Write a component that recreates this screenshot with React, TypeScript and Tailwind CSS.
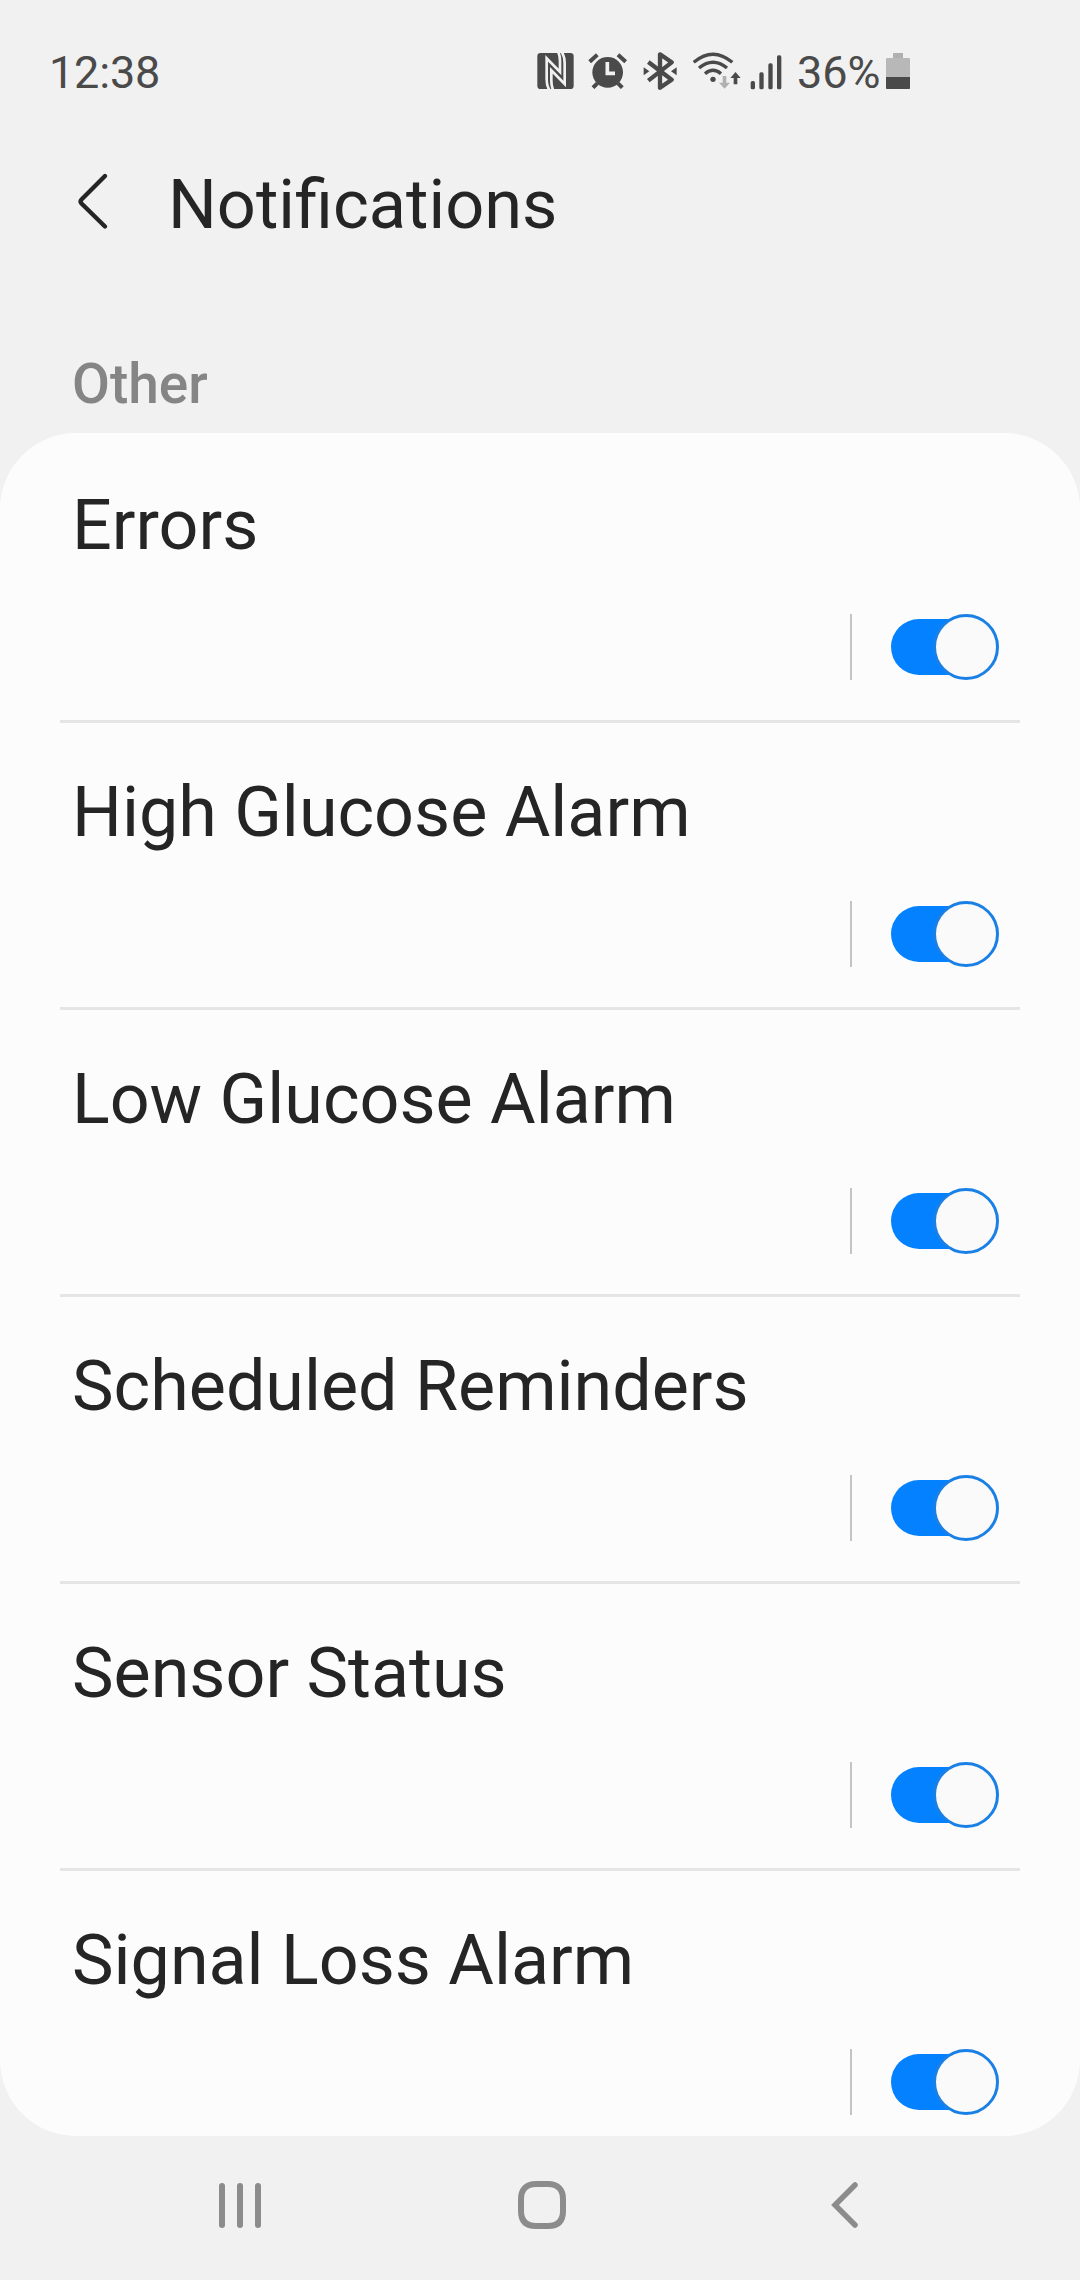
const ROWS = [
  'Errors',
  'High Glucose Alarm',
  'Low Glucose Alarm',
  'Scheduled Reminders',
  'Sensor Status',
  'Signal Loss Alarm',
];

function NfcIcon() {
  return (
    <svg className="h-[36px] w-[37px]" viewBox="51 39 111 108" fill="none">
      <rect x="52" y="39" width="109" height="108" rx="10" fill="#4a4a4a" />
      <g stroke="#f1f1f1" strokeWidth="8">
        <path d="M88 149Q80 138 80 118V55L120 96V64Q120 46 115 37" />
        <path d="M126 37Q134 50 134 70V132L94 91V122Q94 138 99 149" />
      </g>
    </svg>
  );
}

function AlarmIcon() {
  return (
    <svg className="h-[36px] w-[40px]" viewBox="205 39 120 108" fill="none">
      <circle cx="264" cy="97" r="46" fill="#4a4a4a" />
      <path
        d="M210 65L233 44M318 65L295 44M233 130L220 143M295 130L308 143"
        stroke="#4a4a4a"
        strokeWidth="12"
      />
      <path d="M263 66V100H286" stroke="#f1f1f1" strokeWidth="11" />
    </svg>
  );
}

function BluetoothIcon() {
  return (
    <svg className="h-[38px] w-[34px]" viewBox="370 36 102 114" fill="none">
      <path
        d="M386 66L456 119L421 143V43L456 67L386 122"
        stroke="#4a4a4a"
        strokeWidth="13"
        strokeLinejoin="round"
      />
      <path d="M372 82L389 94L372 106ZM471 82L454 94L471 106Z" fill="#4a4a4a" />
    </svg>
  );
}

function WifiIcon() {
  return (
    <svg className="h-[37px] w-[50px]" viewBox="-20 37 150 111" fill="none">
      <path
        d="M-18 68Q40 19 98 68M-2 85Q40 50 82 85M16 102Q40 82 64 102"
        stroke="#4a4a4a"
        strokeWidth="10"
      />
      <circle cx="40" cy="119" r="8" fill="#4a4a4a" />
      <path d="M69 109H80V129H91L74.500 147L58 129H69Z" fill="#b0b0b0" />
      <path d="M102 134H113V115H123L107.500 97L92 115H102Z" fill="#4a4a4a" />
    </svg>
  );
}

function SignalIcon() {
  return (
    <svg className="h-[35px] w-[32px]" viewBox="150 44 96 105" fill="#4a4a4a">
      <rect x="152" y="122" width="13" height="25" rx="5" />
      <rect x="178" y="96" width="13" height="51" rx="5" />
      <rect x="205" y="69" width="13" height="78" rx="5" />
      <rect x="231" y="45" width="13" height="102" rx="5" />
    </svg>
  );
}

function BatteryIcon() {
  return (
    <svg className="h-[36px] w-[24px]" viewBox="0 0 24 36">
      <path d="M7 0h10v5H7z" fill="#b0b0b0" />
      <rect y="5" width="24" height="31" rx="1" fill="#b8b8b8" />
      <path d="M0 24h24v11a1 1 0 0 1-1 1H1a1 1 0 0 1-1-1z" fill="#4a4a4a" />
    </svg>
  );
}

function Toggle() {
  return (
    <div className="grid h-[66px] w-[108px] items-center">
      <div className="col-start-1 row-start-1 h-[56px] w-[90px] rounded-full bg-[#0381fe]" />
      <div className="col-start-1 row-start-1 size-[66px] justify-self-end rounded-full border-[3px] border-[#1a80e6] bg-[#fafafa]" />
    </div>
  );
}

export default function App() {
  return (
    <div className="flex h-[2280px] w-[1080px] flex-col overflow-hidden bg-[#f1f1f1] font-['Roboto',sans-serif] text-[#252525]">
      <div className="flex h-[144px] items-start pl-[49px] text-[45px] leading-[60px] text-[#4a4a4a]">
        <span className="mt-[43px] w-[488px] tracking-[-0.2px]">12:38</span>
        <span className="mt-[53px]"><NfcIcon /></span>
        <span className="mt-[53px] ml-[14px]"><AlarmIcon /></span>
        <span className="mt-[52px] ml-[15px]"><BluetoothIcon /></span>
        <span className="mt-[52px] ml-[16px]"><WifiIcon /></span>
        <span className="mt-[55px] ml-[7px]"><SignalIcon /></span>
        <span className="mt-[43px] ml-[15px] w-[89px]">36%</span>
        <span className="mt-[53px]"><BatteryIcon /></span>
      </div>
      <header className="flex h-[120px] items-center pl-[78px]">
        <svg className="mb-[6px] h-[58px] w-[32px]" viewBox="0 0 32 58" fill="none">
          <path d="M27 4L3.500 27.500Q1.500 29.500 3.500 31.500L27 54.500" stroke="#252525" strokeWidth="4.400" strokeLinecap="round" />
        </svg>
        <h1 className="mt-[2px] ml-[58px] text-[68.5px] leading-[80px]">Notifications</h1>
      </header>
      <h2 className="h-[169px] pt-[90px] pl-[72px] text-[55px] leading-[60px] font-medium text-[#858585]">Other</h2>
      <main className="h-[1703px] overflow-hidden rounded-[76px] bg-[#fcfcfc]">
        {ROWS.map((name) => (
          <section key={name} className="mx-[60px] h-[287px] pt-[52px] pr-[21px] pl-[12px]">
            <h3 className="h-[80px] text-[70px] leading-[80px] whitespace-nowrap">{name}</h3>
            <div className="mt-[49px] flex justify-end gap-[39px]">
              <div className="h-[66px] w-[2px] bg-[#c4c4c4]" />
              <Toggle />
            </div>
            <div className="mt-[40px] -mr-[21px] -ml-[12px] h-[3px] bg-[#e5e5e5]" />
          </section>
        ))}
      </main>
      <nav className="flex h-[144px] items-center pb-[6px] pl-[219px]">
        <div className="flex w-[299px] gap-[12px]">
          <i className="h-[45px] w-[6px] rounded-full bg-[#8c8c8c]" />
          <i className="h-[45px] w-[6px] rounded-full bg-[#8c8c8c]" />
          <i className="h-[45px] w-[6px] rounded-full bg-[#8c8c8c]" />
        </div>
        <svg className="size-[48px]" viewBox="0 0 48 48" fill="none">
          <path d="M18 3H30C40 3 45 9 45 18V30C45 40 40 45 30 45H18C8 45 3 40 3 30V18C3 9 8 3 18 3Z" stroke="#8c8c8c" strokeWidth="6" />
        </svg>
        <svg className="ml-[265px] h-[46px] w-[27px]" viewBox="0 0 27 46" fill="none">
          <path d="M24 3L4 23L24 43" stroke="#8c8c8c" strokeWidth="5.500" strokeLinecap="round" />
        </svg>
      </nav>
    </div>
  );
}
